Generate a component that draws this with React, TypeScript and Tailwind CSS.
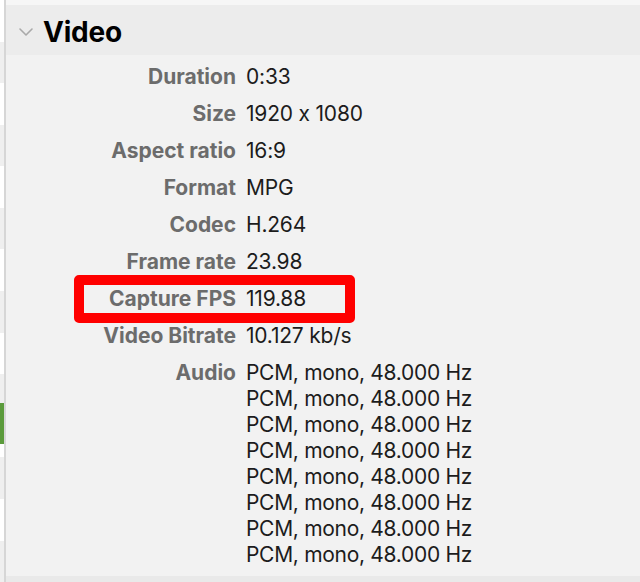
import React from 'react'

const rows = [
  { label: 'Duration', value: '0:33' },
  { label: 'Size', value: '1920 x 1080' },
  { label: 'Aspect ratio', value: '16:9' },
  { label: 'Format', value: 'MPG' },
  { label: 'Codec', value: 'H.264' },
  { label: 'Frame rate', value: '23.98' },
  { label: 'Capture FPS', value: '119.88' },
  { label: 'Video Bitrate', value: '10.127 kb/s' },
]

const audio = Array.from({ length: 8 }, () => 'PCM, mono, 48.000 Hz')

// stripes of the list behind the inspector, peeking out at the left edge
const stripes = ['bg-white', 'bg-[#efefef]', 'bg-white', 'bg-[#efefef]', 'bg-white', 'bg-[#efefef]', 'bg-white', 'bg-[#efefef]', 'bg-white', 'bg-[#efefef]', 'bg-white', 'bg-[#efefef]', 'bg-white', 'bg-[#efefef]']

export default function App() {
  return (
    <div className="flex h-[582px] w-[640px] overflow-hidden bg-[#f2f2f2] font-['Inter',sans-serif] [font-feature-settings:'calt'_0]">
      <div className="relative flex w-[4px] shrink-0 flex-col">
        {stripes.map((c, i) => (
          <div key={i} className={'h-[42px] ' + c} />
        ))}
        <div className="absolute left-0 top-[403px] h-[41px] w-[4px] bg-[#5b9b3c]" />
      </div>
      <div className="w-[2px] shrink-0 bg-[#d6d6d6]" />
      <div className="relative flex flex-1 flex-col">
        <div className="h-[5px] bg-[#f6f6f6]" />
        <div className="flex h-[50px] items-center bg-[#ececec] pt-[3px]">
          <svg className="ml-[12px] h-[10px] w-[16px]" viewBox="0 0 16 10" fill="none">
            <path d="M2 2l6 6 6-6" stroke="#a9a9a9" strokeWidth="1.6" strokeLinecap="round" strokeLinejoin="round" />
          </svg>
          <span className="ml-[9px] text-[28px] font-bold leading-none tracking-[-0.2px] text-black">Video</span>
        </div>
        <div className="mt-[3px] grid grid-cols-[230px_1fr] gap-x-[10px]">
          {rows.map((r) => (
            <React.Fragment key={r.label}>
              <div className="text-right text-[21px] font-bold leading-[37px] text-[#6c6c6c]">{r.label}</div>
              <div className="text-[21px] leading-[37px] tracking-[-0.2px] text-[#1c1c1c]">{r.value}</div>
            </React.Fragment>
          ))}
          <div className="mt-[6px] text-right text-[21px] font-bold leading-[26px] text-[#6c6c6c]">Audio</div>
          <div className="mt-[6px] flex flex-col text-[21px] leading-[26px] tracking-[-0.3px] text-[#1c1c1c]">
            {audio.map((a, i) => (
              <div key={i}>{a}</div>
            ))}
          </div>
        </div>
        <div className="mt-auto h-[6px] bg-[#e9e9e9]" />
        <div className="absolute left-[68px] top-[275px] h-[48px] w-[281px] rounded-[5px] border-[10px] border-[#ff0000]" />
      </div>
    </div>
  )
}
